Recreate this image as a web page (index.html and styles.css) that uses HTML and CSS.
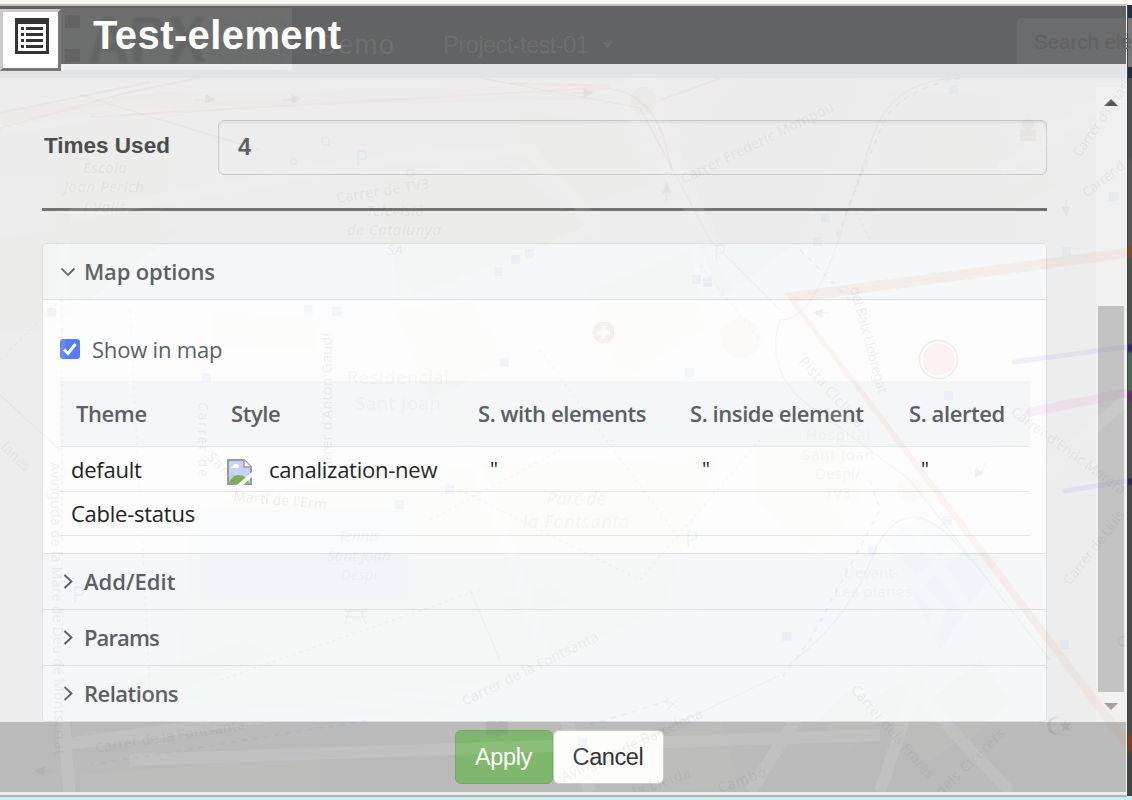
FILE: index.html
```html
<!DOCTYPE html>
<html lang="en">
<head>
<meta charset="utf-8">
<title>Test-element</title>
<link rel="stylesheet" href="styles.css">
</head>
<body>
<div class="app">
  <div class="window">
    <header class="titlebar">
      <button class="menu-button" aria-label="List">
        <svg width="34" height="36" viewBox="0 0 34 36"><path fill="#333" fill-rule="evenodd" d="M0 0H34V36H0ZM3 6V33H31V6Z"/><path fill="#333" d="M6 9h3v3H6zM11 9h17v3H11zM6 15h3v3H6zM11 15h17v3H11zM6 21h3v3H6zM11 21h17v3H11zM6 27h3v3H6zM11 27h17v3H11z"/></svg>
      </button>
      <h1 class="title">Test-element</h1>
    </header>
    <main class="content">
      <div class="form">
        <div class="field">
          <label class="field-label">Times Used</label>
          <div class="field-input">4</div>
        </div>
        <div class="divider"></div>
        <section class="accordion">
          <div class="acc-head first"><svg class="chev" width="16" height="16" viewBox="0 0 16 16"><path d="M1.500 4.500L8 11L14.500 4.500"/></svg><span class="w-map">Map options</span></div>
          <div class="acc-body">
            <div class="check-row">
              <svg width="20" height="20" viewBox="0 0 20 20"><rect width="20" height="20" rx="3" fill="#567df4"/><path d="M4 10.500L8 14.500L15.500 5" fill="none" stroke="#fff" stroke-width="3"/></svg>
              <span class="w-show">Show in map</span>
            </div>
            <div class="grid head">
              <span>Theme</span><span>Style</span><span>S. with elements</span><span>S. inside element</span><span>S. alerted</span>
            </div>
            <div class="grid row">
              <span>default</span>
              <span class="style-cell"><svg width="25" height="26" viewBox="0 0 25 26"><path d="M1 1H17L24 8V25H1Z" fill="#c5d3f5" stroke="#9b9b9b" stroke-width="2"/><path d="M17 1V8H24" fill="#fff" stroke="#9b9b9b" stroke-width="1.500"/><path d="M4 9q0-2 2-2q1-3 3-2q3 0 3 4z" fill="#fff"/><path d="M2 24Q5 16 12 16Q19 16 22 24Z" fill="#7bae54"/><path d="M10 26L25 13V18L16 26Z" fill="#fff"/></svg><span>canalization-new</span></span>
              <span class="quote">"</span><span class="quote">"</span><span class="quote">"</span>
            </div>
            <div class="grid row last"><span>Cable-status</span></div>
          </div>
          <div class="acc-head"><svg class="chev" width="16" height="16" viewBox="0 0 16 16"><path d="M4.500 1L11.500 7.500L4.500 14"/></svg><span>Add/Edit</span></div>
          <div class="acc-head"><svg class="chev" width="16" height="16" viewBox="0 0 16 16"><path d="M4.500 1L11.500 7.500L4.500 14"/></svg><span class="w-params">Params</span></div>
          <div class="acc-head"><svg class="chev" width="16" height="16" viewBox="0 0 16 16"><path d="M4.500 1L11.500 7.500L4.500 14"/></svg><span class="w-rel">Relations</span></div>
        </section>
      </div>
      <div class="scrollbar">
        <i class="arrow up"></i><i class="thumb"></i><i class="arrow down"></i>
      </div>
    </main>
    <footer class="footer"><button class="btn apply">Apply</button><button class="btn cancel">Cancel</button></footer>
  </div>
  <div class="map-edge"></div>

  <svg class="map" width="1132" height="800" viewBox="0 0 1132 800">
    <g class="brand">
      <rect x="61" y="8" width="231" height="56" fill="#fff" opacity=".07"/>
      <rect x="61" y="64" width="231" height="6" fill="#fff" opacity=".4"/>
      <g fill="#555" opacity=".4"><rect x="65" y="15" width="15" height="13"/><rect x="65" y="49" width="15" height="13"/></g>
      <g class="logo-text"><text x="88" y="62" textLength="118" lengthAdjust="spacingAndGlyphs" fill="#555" opacity=".4">APX</text><text x="210" y="62" textLength="80" lengthAdjust="spacingAndGlyphs" fill="#5f6e6b" opacity=".28">GIS</text></g>
      <text class="nav" x="317" y="54" font-size="28" textLength="77">Demo</text>
      <text class="nav" x="443" y="53" font-size="24" textLength="146">Project-test-01</text>
      <path d="M602 42h11l-5.500 6z" fill="#6d6f73"/>
      <rect x="1017" y="18" width="109" height="48" rx="4" fill="#fff" opacity=".06"/>
      <text class="find" x="1034" y="49" font-size="20.500">Search eler</text>
    </g>
    <clipPath id="area"><rect x="0" y="78" width="1126" height="714"/></clipPath>
    <g clip-path="url(#area)">
      <g class="land">
        <path d="M0 130L155 112L128 175H0Z" fill="#cfe8cf"/>
        <path d="M60 140L140 118L172 150L160 235H55ZM520 110L620 125L650 185L580 205L520 160ZM380 180L510 165L590 230L400 300ZM680 130L760 95L780 125L700 160ZM0 235L180 230L50 330H0Z"/>
        <path d="M670 160L740 78H860L850 120L800 240L720 300ZM885 90L1000 95L1020 240L870 240Z" fill="#cde8cd"/>
        <path d="M915 135L960 115L995 165L945 185ZM985 205L1045 170L1055 185L995 218ZM395 310L470 300L510 360L430 400ZM590 290L690 250L705 330L620 380ZM215 310L320 320L315 350L210 345Z"/>
        <path d="M760 430L840 420L860 500L820 560L755 500ZM370 470L720 455L660 610L420 720L180 700L190 510Z" fill="#e2efce"/>
        <path d="M200 510H408V600H200ZM885 540L920 515L1000 560L940 650Z" fill="#a9d0e0"/>
        <path d="M130 680L245 640L272 655L140 705ZM500 600L550 585L570 600L520 620ZM870 700L915 675L960 740L925 765ZM820 720L850 690L880 720L850 750ZM80 775L320 755V792H80ZM640 740L720 720L740 785L670 792ZM930 700L980 660L1010 700L970 740Z"/>
      </g>
      <g class="roads">
        <path stroke-width="12" d="M0 130L200 95L620 90M70 215L380 160L530 150L600 230M640 125L720 260L850 430L1040 720M180 345L430 305L600 225M65 240L50 540L70 800M660 110Q700 260 850 430M400 280L510 550L590 792M60 745L500 685L780 570L1040 430M130 760L880 735M750 792L840 650L1126 400M840 500L940 610L880 792M1000 170L1126 85M840 610L1010 792"/>
        <circle cx="643" cy="101" r="20" stroke-width="12"/>
      </g>
      <g class="pink"><path d="M0 128L130 92L200 78M0 113L150 82M90 117L350 102L600 88Q645 88 663 135L672 170M510 83L610 86M660 100Q690 90 720 78"/><path class="wide" d="M0 118L160 100L600 92"/></g>
      <g class="rail"><path d="M480 78L640 108L710 240L780 310M958 78Q895 80 875 130L835 250Q810 320 780 320Q760 380 830 420L910 480L1050 660M788 665Q850 620 875 550Q910 480 970 560M500 660L470 590M590 765L780 675M0 395L60 450M80 95L260 150"/></g>
      <g class="paths"><path d="M62 300V540L64 740M130 310L150 690M440 480L640 580M430 520L560 450M640 580L760 440M540 350L680 540M220 680L480 590M700 265L760 340M880 120L850 200L870 240M0 360L60 300"/></g>
      <path class="blue-dash" d="M960 78Q895 90 880 130L835 240M800 250L850 300M870 480L880 510L810 640L780 680M90 765L370 720M590 725L670 700"/>
      <path fill="#f28040" opacity=".08" d="M784 293L1126 248V258L796 302L1126 735V750Z"/>
      <path class="blueline" d="M1014 362L1126 347M1065 491L1126 481"/>
      <path class="purple" d="M1030 412L1126 393"/>
      <g class="stops"><path d="M949 85h9v9h-9zM821 214h9v9h-9zM813 237h9v9h-9zM1062 247h9v9h-9zM1109 192h9v9h-9zM494 267h9v9h-9zM511 255h9v9h-9zM525 249h9v9h-9zM692 275h9v9h-9zM703 278h9v9h-9zM47 308h9v9h-9zM304 305h9v9h-9zM332 307h9v9h-9zM202 373h9v9h-9zM500 358h9v9h-9zM685 368h9v9h-9zM944 391h9v9h-9zM395 500h9v9h-9zM445 485h9v9h-9zM943 516h9v9h-9zM868 546h9v9h-9zM782 632h9v9h-9zM1060 640h9v9h-9zM578 738h9v9h-9z"/></g>
      <g class="signs"><path d="M195 100H210M281 100H296M573 93H588M666 202V190M1066 212V200M40 771H54M822 313H830M980 475L985 463"/><path class="solid" d="M206 95L215 99L206 103ZM292 95L301 99L292 103ZM584 89L593 93L584 97ZM663 193L667 183L671 193ZM1062 207L1066 216L1070 207ZM44 767L35 771L44 775ZM822 309L813 313L822 317ZM976 469L975 477L983 473Z"/><path d="M329 145h-7v-7h7zM291 159h5v5h-5zM407 170h6v6h-6zM345 611h22M349 611l-4 13M361 611l5 13M345 617h22M666 697l14 14M680 697l-14 14"/></g>
      <circle cx="603.500" cy="332.500" r="11" fill="#d55" opacity=".09"/><path d="M603.500 326v13M597 332.500h13" stroke="#fff" stroke-width="3.500"/>
      <circle cx="938.500" cy="359.500" r="19" fill="none" stroke="#777" stroke-width="1.500" opacity=".12"/><circle cx="938.500" cy="359.500" r="16" fill="#f44" opacity=".065"/>
      <g fill="#986c40" opacity=".07"><circle cx="1028" cy="124" r="6"/><path d="M1020 130h16v11h-16z"/><ellipse cx="643" cy="101" rx="13" ry="14" opacity=".4"/><circle cx="741" cy="338" r="20" opacity=".3"/><circle cx="910" cy="490" r="13" opacity=".3"/></g>
      <g class="street">
        <text transform="translate(337 203) rotate(-9)" textLength="94">Carrer de TV3</text>
        <text transform="translate(684 184) rotate(-26)" textLength="168">Carrer Frederic Mompou</text>
        <text transform="translate(1080 158) rotate(-55)" textLength="90">Carrer d'Ignasi</text>
        <text transform="translate(1087 198) rotate(-38)" textLength="50">Carrer d</text>
        <text transform="translate(198 402) rotate(90)" textLength="75">Carrer de</text>
        <text transform="translate(206 458) rotate(45)" textLength="34">Sant</text>
        <text transform="translate(233 501) rotate(5)" textLength="94">Martí de l'Erm</text>
        <text transform="translate(332 478) rotate(-90)" textLength="145">Carrer d'Anton Gaudí</text>
        <text transform="translate(50 462) rotate(89)" textLength="293">Avinguda de la Mare de Deu de Montserrat</text>
        <text transform="translate(850 288) rotate(75)" textLength="110">del Baix Llobregat</text>
        <text transform="translate(798 362) rotate(48)" textLength="90">Pista Ciclista</text>
        <text transform="translate(1010 414) rotate(36)" textLength="138">Carrer d'Enric Morera</text>
        <text transform="translate(1070 586) rotate(-52)" textLength="90">Carrer de Lluís</text>
        <text transform="translate(96 753) rotate(-9)" textLength="151">Carrer de la Fontsanta</text>
        <text transform="translate(465 706) rotate(-26)" textLength="150">Carrer de la Fontsanta</text>
        <text transform="translate(564 782) rotate(-25)" textLength="154">Avinguda de Barcelona</text>
        <text transform="translate(635 797) rotate(-20)" textLength="60">la Lleida</text>
        <text transform="translate(720 793) rotate(-20)" textLength="50">Cambó</text>
        <text transform="translate(850 690) rotate(49)" textLength="119">Carrer dels Frares</text>
        <text transform="translate(941 797) rotate(-44)" textLength="90">dels Cirerers</text>
        <text transform="translate(0 448) rotate(44)" textLength="35">lanes</text>
        <text transform="translate(1117 646)">C</text>
      </g>
      <g class="places">
        <g font-style="italic"><text x="105" y="173" textLength="44">Escola</text><text x="104" y="192" textLength="80">Joan Perich</text><text x="105" y="212" textLength="42">i Valls</text><text x="395" y="216" textLength="58">Televisió</text><text x="394" y="235" textLength="94">de Catalunya</text><text x="395" y="255">SA</text></g>
        <g class="faint" font-style="italic"><text x="576" y="505" font-size="18">Parc de</text><text x="576" y="528" font-size="18" textLength="107">la Fontsanta</text><text x="359" y="541">Tennis</text><text x="359" y="561">Sant Joan</text><text x="359" y="580">Despí</text></g>
        <g class="faint"><text x="398" y="384" font-size="18" textLength="102">Residencial</text><text x="398" y="410" font-size="18" textLength="85">Sant Joan</text><text x="838" y="440" textLength="64">Hospital</text><text x="838" y="460" textLength="72">Sant Joan</text><text x="838" y="479">Despí/</text><text x="838" y="498">TV3</text><text x="871" y="578" textLength="55">Llevant-</text><text x="873" y="597" textLength="78">Les planes</text></g>
        <g class="parking"><text x="362" y="166">P</text><text x="720" y="260">P</text><text x="79" y="602">P</text><text x="692" y="547">P</text></g>
      </g>
      <g fill="#555" opacity=".13"><path d="M1061 718A9 9 0 1 0 1061 733A8 8 0 1 1 1061 718ZM1065 720l2 4 4-1-3 4 2 4-4-2-4 2 1-4-3-3h4z"/><path d="M486 721h9l2 2 2-2h9v14h-9l-2 3-2-3h-9z" opacity=".6"/></g>
    </g>
  </svg>
</div>
</body>
</html>
```
FILE: styles.css
```css
* { box-sizing: border-box; }
body { margin: 0; overflow: hidden; font-family: "Liberation Sans", Arial, sans-serif; }
.app { position: relative; display: flex; width: 1132px; height: 800px; padding: 4px 0 2px; border-bottom: 3px solid #cdf0ef; background: linear-gradient(#fdf6f6 50%, #cdf0ef 50%); }
.window { display: flex; flex-direction: column; width: 1127px; height: 793px; border-top: 2px solid #c9bebf; border-right: 1px solid #f4f4f4; border-bottom: 2px solid #a9b8b7; background: #ededed; }
.map-edge { width: 5px; height: 791px; margin-top: 1px; border-left: 1px solid #444; background: linear-gradient(#1c324d 0 13px, #77797a 13px 62px, #1b2d44 62px 73px, #4b4f4f 73px 150px, #5b5759 160px 240px, #874623 243px 251px, #4b5449 254px 338px, #29247c 341px 345px, #436e55 349px 384px, #662d75 388px 394px, #4f4d50 399px 473px, #28246b 474px 478px, #4c4b4c 481px 728px, #7c3f1e 732px 744px, #434543 750px); }
.titlebar { display: flex; height: 72px; flex: none; background: linear-gradient(#626364 58px, #e2e4e6 58px); }
.menu-button { display: flex; width: 61px; height: 62px; margin: 3px 0 0; padding: 6px 0 0 12px; border: 3px solid; border-color: #cacaca #777 #777 #cacaca; background: #fff; align-items: flex-start; }
.title { position: relative; z-index: 2; margin: 6px 0 0 32px; font-size: 40px; line-height: 46px; letter-spacing: .4px; color: #fdfdfd; }
.content { display: flex; height: 644px; flex: none; justify-content: space-between; }
.form { width: 1005px; margin-left: 42px; padding-top: 42px; }
.field { display: flex; height: 55px; }
.field-label { width: 176px; padding: 12px 0 0 2px; font-size: 22.500px; line-height: 28px; font-weight: bold; color: #464646; }
.field-input { flex: 1; padding: 12px 19px; border: 1px solid #c9c9c9; border-radius: 6px; box-shadow: inset 0 2px 2px rgba(0,0,0,.05); font-size: 23.500px; line-height: 28px; font-weight: bold; color: #606060; }
.divider { height: 3px; margin: 33px 0 32px; background: #717172; }
.accordion { height: 479px; border: 1px solid #dcdfe1; border-radius: 5px; overflow: hidden; background: #fdfdfd; font-family: "Open Sans", "Noto Sans", sans-serif; font-size: 22px; color: #5a6065; }
.acc-head { display: flex; height: 56px; padding: 0 17px; align-items: center; gap: 8px; border-top: 1px solid #dcdfe1; background: #f5f7f8; font-weight: 600; line-height: 30px; }
.acc-head.first { border-top: 0; border-bottom: 1px solid #dcdfe1; }
.acc-head span { margin-top: -2px; }
.w-map { letter-spacing: -.15px; }
.w-params { letter-spacing: -.9px; }
.w-rel { letter-spacing: -.5px; }
.chev { fill: none; stroke: #555b60; stroke-width: 1.800; }
.acc-body { height: 253px; padding: 31px 16px 0 17px; }
.check-row { display: flex; height: 50px; align-items: flex-start; padding-top: 8px; gap: 12px; line-height: 24px; }
.w-show { margin-top: -2px; letter-spacing: -.2px; }
.grid { display: grid; grid-template-columns: 155px 247px 212px 219px 1fr; align-items: center; }
.grid.head { height: 66px; padding: 0 0 2px 16px; border-bottom: 1px solid #e2e7eb; background: #f4f6f7; font-weight: 600; letter-spacing: -.42px; }
.grid.row { height: 45px; padding-left: 11px; border-bottom: 1px solid #e6e7e8; color: #212324; line-height: 40px; letter-spacing: -.25px; }
.grid.row.last { height: 44px; padding-bottom: 2px; }
.style-cell { display: flex; align-items: center; gap: 17px; padding-left: 1px; }
.style-cell svg { margin-top: 5px; }
.quote { padding-left: 17px; font-size: 20px; }
.scrollbar { display: flex; flex-direction: column; align-items: center; width: 30px; height: 635px; margin-top: 9px; background: #f1f1f1; }
.arrow { width: 14px; height: 7px; }
.arrow.up { margin-top: 12px; background: #555; clip-path: polygon(50% 0, 100% 100%, 0 100%); }
.arrow.down { margin-top: 11px; background: #a2a2a2; clip-path: polygon(0 0, 100% 0, 50% 100%); }
.thumb { width: 26px; height: 386px; margin-top: 200px; background: #c3c3c3; }
.footer { display: flex; height: 70px; flex: none; justify-content: center; padding: 8px 0 0; background: #bababa; }
.btn { width: 98px; height: 54px; padding: 0; border: 1px solid #6caf5c; border-radius: 6px; font: 23.500px "Liberation Sans", Arial, sans-serif; letter-spacing: -.4px; }
.apply { background: #7fb76c; color: #fff; margin-left: -8px; }
.cancel { width: 111px; border-color: #cbcbcb; background: #fdfdfc; color: #333; }

.map { position: absolute; left: 0; top: 0; pointer-events: none; }
.logo-text { font: bold 64px "Liberation Sans", Arial, sans-serif; filter: blur(1px); }
.nav { fill: #6f6f6f; }
.find { fill: #616161; }
.land { fill: #e6deb8; opacity: .045; mix-blend-mode: multiply; }
.roads { fill: none; stroke: #fff; opacity: .1; }
.pink { fill: none; stroke: #e8a0aa; stroke-width: 2; opacity: .13; }
.wide { stroke: #e8b0a8; stroke-width: 16; opacity: .3; }
.rail { fill: none; stroke: #555; stroke-width: 1.500; opacity: .045; }
.paths { fill: none; stroke: #e06060; stroke-width: 1.500; stroke-dasharray: 3 4; opacity: .06; }
.blue-dash { fill: none; stroke: #6464e0; stroke-width: 2; stroke-dasharray: 5 6; opacity: .07; }
.blueline { fill: none; stroke: #7060ff; stroke-width: 5; stroke-linecap: round; opacity: .09; }
.purple { fill: none; stroke: #d050d0; stroke-width: 9; stroke-linecap: round; opacity: .08; }
.stops { fill: #4a86ff; opacity: .06; }
.signs { fill: none; stroke: #555; opacity: .07; }
.signs .solid { fill: #555; }
.street { font: 14px "Noto Sans", sans-serif; fill: #555; opacity: .08; }
.places { font: 15px "Noto Sans", sans-serif; fill: #555; text-anchor: middle; opacity: .07; }
.faint { opacity: .6; }
.parking { font-size: 22px; fill: #4080ff; }
```
